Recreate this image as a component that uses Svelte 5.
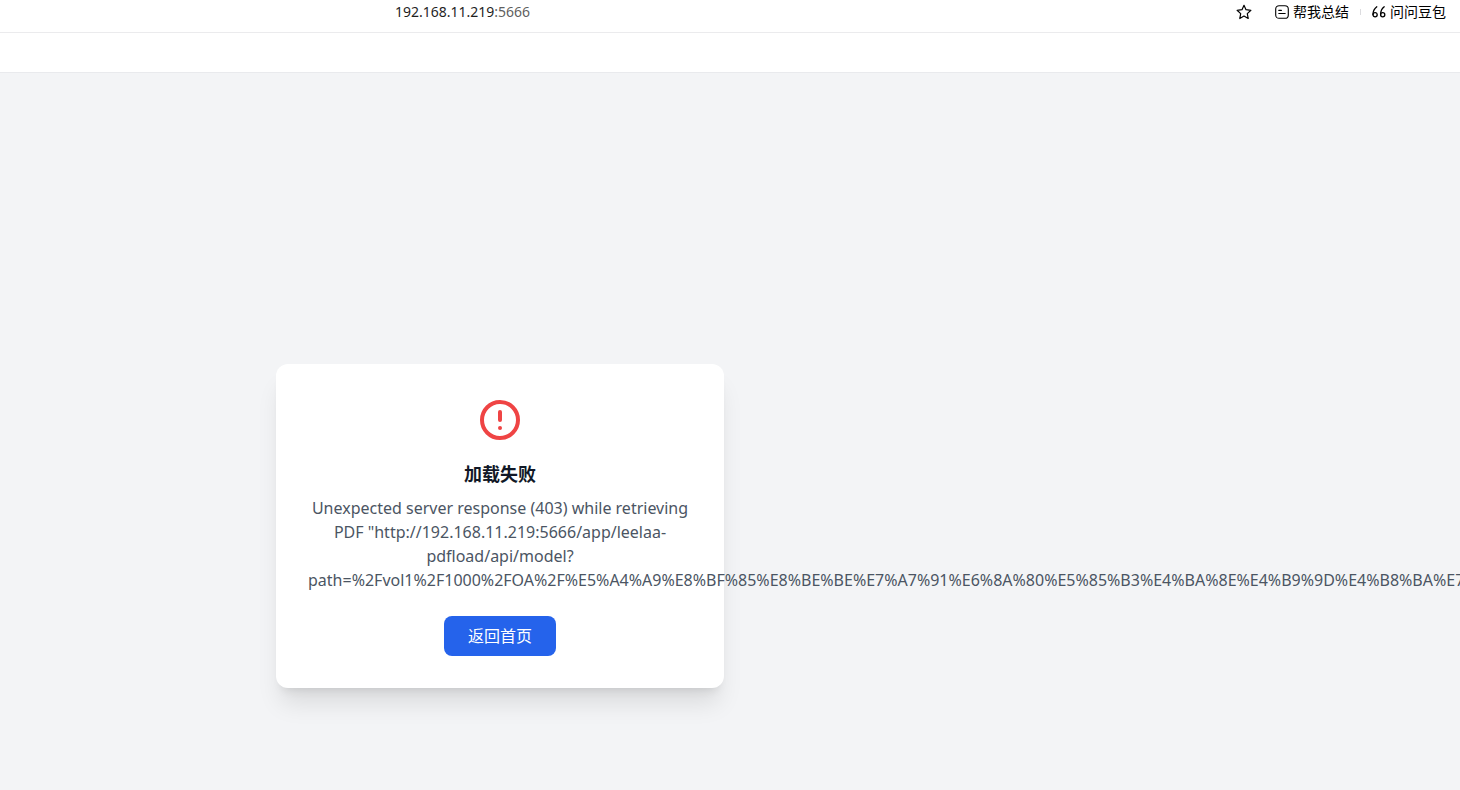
<script>
  const host = '192.168.11.219';
  const port = '5666';

  const message =
    `Unexpected server response (403) while retrieving PDF "http://${host}:${port}` +
    '/app/leelaa-pdfload/api/model?path=%2Fvol1%2F1000%2FOA%2F%E5%A4%A9%E8%BF%85' +
    '%E8%BE%BE%E7%A7%91%E6%8A%80%E5%85%B3%E4%BA%8E%E4%B9%9D%E4%B8%BA%E7';
</script>

<div class="page">
  <header class="address-bar">
    <span class="address">{host}<span class="port">:{port}</span></span>

    <div class="actions">
      <button type="button" class="star" aria-label="收藏">
        <svg width="16" height="16" viewBox="0 0 16 16" fill="none" stroke="currentColor" stroke-width="1.2" stroke-linejoin="round">
          <path d="M8 1.3l2 4.4 4.9.6-3.6 3.3.9 4.9L8 12.1l-4.2 2.4.9-4.9L1.1 6.3 6 5.7z" />
        </svg>
      </button>
      <button type="button">
        <svg width="14" height="14" viewBox="0 0 14 14" fill="none" stroke="currentColor" stroke-width="1.1" stroke-linecap="round">
          <rect x="0.7" y="0.7" width="12.6" height="12.6" rx="3.4" />
          <path d="M3.8 5.4h2.6M3.8 8.5h6.4" />
        </svg>
        帮我总结
      </button>
      <span class="divider"></span>
      <button type="button">
        <svg width="14" height="14" viewBox="0 0 14 14" fill="none" stroke="currentColor" stroke-width="1.3" stroke-linecap="round">
          <path d="M4.8 1.8C2.4 3.6 1 6.2 1 9.6" />
          <circle cx="3.1" cy="9.8" r="2.1" />
          <path d="M12.2 1.8C9.8 3.6 8.6 6.2 8.6 9.6" />
          <circle cx="10.7" cy="9.8" r="2.1" />
        </svg>
        问问豆包
      </button>
    </div>
  </header>

  <div class="toolbar"></div>

  <main>
    <div class="stage">
      <section class="card">
        <svg class="alert" width="48" height="48" viewBox="0 0 24 24" fill="none" stroke="currentColor" stroke-width="2" stroke-linecap="round" stroke-linejoin="round">
          <circle cx="12" cy="12" r="9" />
          <path d="M12 8v4M12 16h.01" />
        </svg>
        <h1>加载失败</h1>
        <p>{message}</p>
        <button type="button" class="primary">返回首页</button>
      </section>
    </div>
  </main>
</div>

<style>
  :global(body) {
    margin: 0;
    background: #f3f4f6;
  }

  .page {
    min-height: 100vh;
    overflow: hidden;
    display: flex;
    flex-direction: column;
    font-family: 'Noto Sans', 'Noto Sans CJK SC', sans-serif;
  }

  button {
    border: 0;
    padding: 0;
    background: none;
    color: inherit;
    font: inherit;
    cursor: pointer;
  }

  .address-bar {
    display: flex;
    justify-content: space-between;
    padding: 0 14px 8px 395px;
    border-bottom: 1px solid #ebebed;
    background: #fff;
    color: #000;
    font-size: 14px;
    line-height: 24px;
  }

  .address {
    color: #1f1f1f;
  }

  .port {
    color: #5f5f5f;
  }

  .actions {
    display: flex;
    align-items: center;
  }

  .actions button {
    display: flex;
    align-items: center;
    gap: 4px;
    white-space: nowrap;
  }

  .actions .star {
    margin-right: 23px;
  }

  .divider {
    width: 1px;
    height: 6px;
    margin: 0 11px;
    background: #dcdcdf;
  }

  .toolbar {
    height: 39px;
    border-bottom: 1px solid #e9eaed;
    background: #fff;
  }

  main {
    flex: 1;
    display: flex;
    background: #f3f4f6;
  }

  /* the viewer column; the card is centred in it */
  .stage {
    box-sizing: border-box;
    flex: 0 1 1000px;
    min-width: 0;
    display: flex;
    justify-content: center;
    align-items: flex-start;
    padding: 291px 16px 64px;
  }

  .card {
    box-sizing: border-box;
    width: 100%;
    max-width: 448px;
    padding: 32px;
    border-radius: 12px;
    background: #fff;
    box-shadow:
      0 20px 25px -5px rgba(0, 0, 0, 0.1),
      0 8px 10px -6px rgba(0, 0, 0, 0.1);
    text-align: center;
  }

  .alert {
    display: block;
    margin: 0 auto 16px;
    color: #ef4444;
  }

  h1 {
    margin: 0 0 8px;
    color: #111827;
    font-size: 18px;
    font-weight: 700;
    line-height: 28px;
  }

  p {
    margin: 0 0 24px;
    color: #4b5563;
    font-size: 16px;
    line-height: 24px;
  }

  .primary {
    padding: 8px 24px;
    border-radius: 8px;
    background: #2563eb;
    color: #fff;
    font-size: 16px;
    line-height: 24px;
  }
</style>
